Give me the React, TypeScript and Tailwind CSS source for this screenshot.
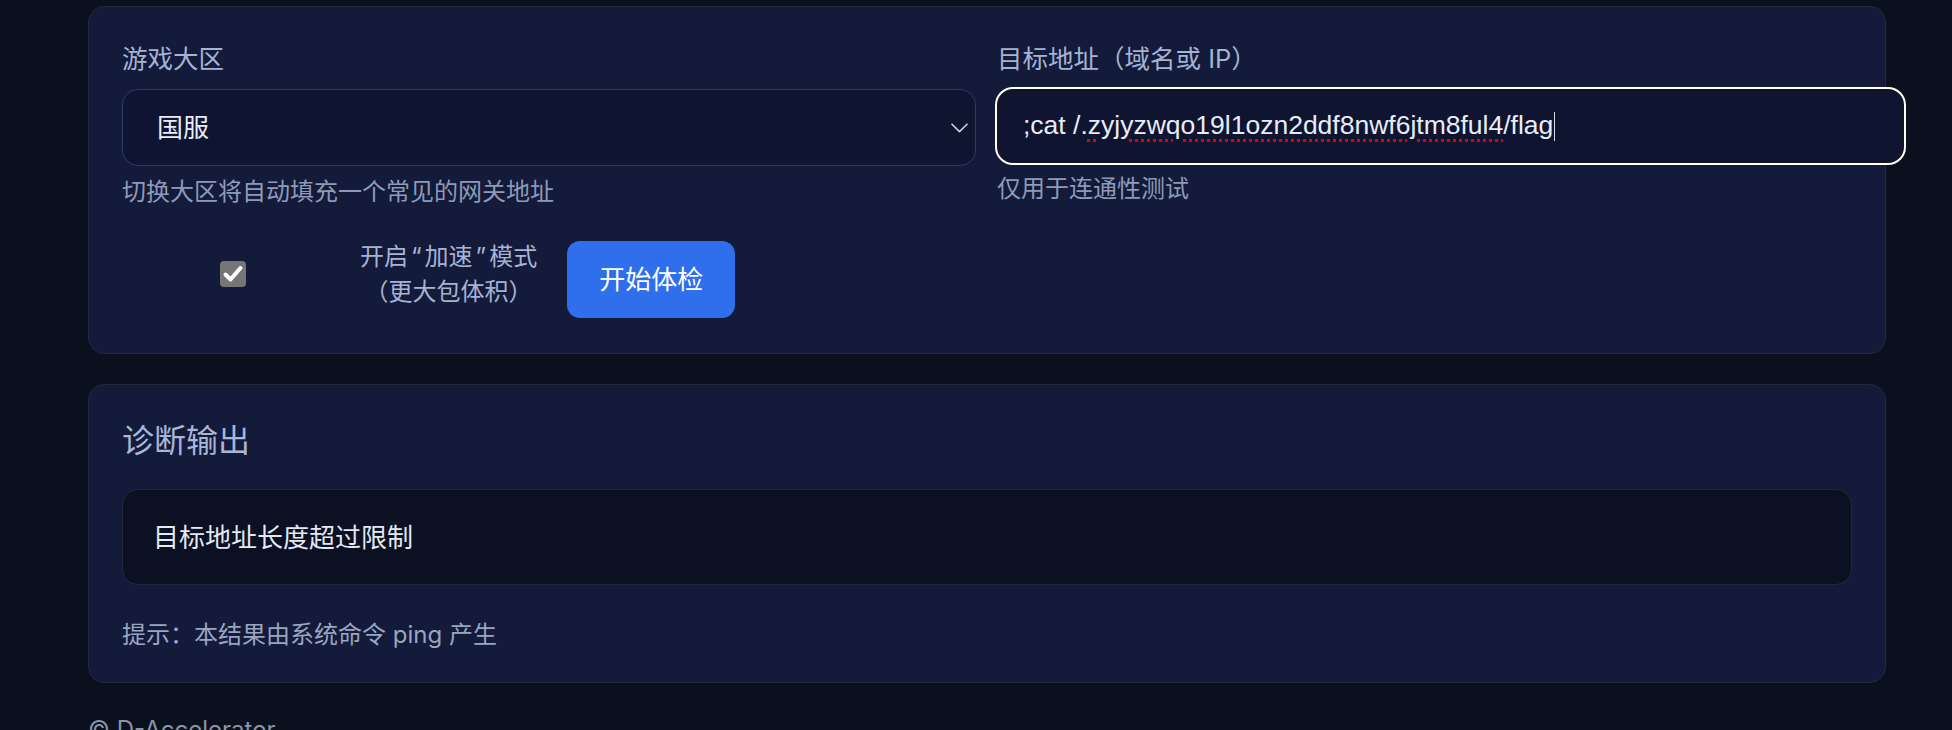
import React from "react";

function Chevron() {
  return (
    <svg width="17" height="10" viewBox="0 0 17 10" fill="none">
      <path d="M1 1.2 L8.5 8.6 L16 1.2" stroke="#c9d1e3" strokeWidth="1.6" strokeLinecap="round" strokeLinejoin="round" />
    </svg>
  );
}

function Check() {
  return (
    <svg width="26" height="26" viewBox="0 0 26 26" fill="none">
      <path d="M5.5 13.5 L10.5 18.5 L20.5 7" stroke="#ffffff" strokeWidth="4" strokeLinecap="round" strokeLinejoin="round" />
    </svg>
  );
}

export default function App() {
  return (
    <div className="min-h-[730px] w-[1952px] overflow-hidden bg-[#0b101f] pt-[6px] pl-[88px] font-[family-name:Inter,'Noto_Sans_CJK_SC',sans-serif]">
      {/* Card 1 */}
      <section className="w-[1798px] rounded-[16px] border border-[#24283c] bg-[#131a3a] pt-[33px] pb-[35px] px-[33px]">
        <div className="grid grid-cols-[854px_855px] gap-x-[21px]">
          <div>
            <div className="text-[25.5px] leading-[38px] text-[#a6b3d3]">游戏大区</div>
            <div className="mt-[11px] flex h-[77px] items-center justify-between rounded-[16px] border border-[#2b3a68] bg-[#0f1431] pl-[34px] pr-[7px]">
              <span className="text-[26px] text-[#e8ecf7]">国服</span>
              <Chevron />
            </div>
            <div className="mt-[8px] text-[24px] leading-[36px] text-[#8e9ab7]">切换大区将自动填充一个常见的网关地址</div>
          </div>
          <div>
            <div className="text-[25.5px] leading-[38px] text-[#a6b3d3]">目标地址（域名或 IP）</div>
            <div className="mt-[11px] mb-[3px] flex h-[74px] w-[907px] items-center rounded-[16px] border-2 border-[#141520] bg-[#0f1430] pl-[24px] ring-2 ring-white">
              <span className="whitespace-nowrap font-[family-name:'Liberation_Sans',Arial,sans-serif] text-[26.5px] text-[#e8ecf7]">
                ;cat /.
                <span className="underline decoration-dotted decoration-[#e60000] decoration-[3px] underline-offset-[5px]">zyjyzwqo19l1ozn2ddf8nwf6jtm8ful4</span>
                /flag
              </span>
              <span className="ml-[1px] h-[29px] w-px bg-[#d4dbea]" />
            </div>
            <div className="mt-[8px] text-[24px] leading-[36px] text-[#8e9ab7]">仅用于连通性测试</div>
          </div>
        </div>
        <div className="mt-[29px] flex items-start">
          <div className="flex h-[70px] w-[222px] items-center justify-center">
            <div className="flex h-[26px] w-[26px] items-center justify-center rounded-[4px] bg-[#767676]">
              <Check />
            </div>
          </div>
          <div className="ml-[16px] text-center text-[24px] leading-[35px] text-[#a6b3d3]">
            <div>
              开启<span className="mx-[3px]">“</span>加速<span className="mx-[3px]">”</span>模式
            </div>
            <div>（更大包体积）</div>
          </div>
          <button className="ml-[30px] mt-[2px] h-[77px] rounded-[13px] bg-[#2f6feb] px-[32px] text-[26px] text-white">
            开始体检
          </button>
        </div>
      </section>

      {/* Card 2 */}
      <section className="mt-[30px] w-[1798px] rounded-[16px] border border-[#24283c] bg-[#131a3a] pt-[33px] pb-[29px] px-[33px]">
        <div className="text-[32px] leading-[45px] text-[#a9b6d8]">诊断输出</div>
        <div className="mt-[26px] flex h-[96px] items-center rounded-[16px] border border-[#24273a] bg-[#0b1022] px-[30px]">
          <span className="text-[26px] text-[#e2e8f4]">目标地址长度超过限制</span>
        </div>
        <div className="mt-[32px] text-[24px] leading-[36px] text-[#9aa5c0]">提示：本结果由系统命令 ping 产生</div>
      </section>

      <div className="mt-[29px] text-[24px] leading-[36px] text-[#8b93a8]">© D-Accelerator</div>
    </div>
  );
}
